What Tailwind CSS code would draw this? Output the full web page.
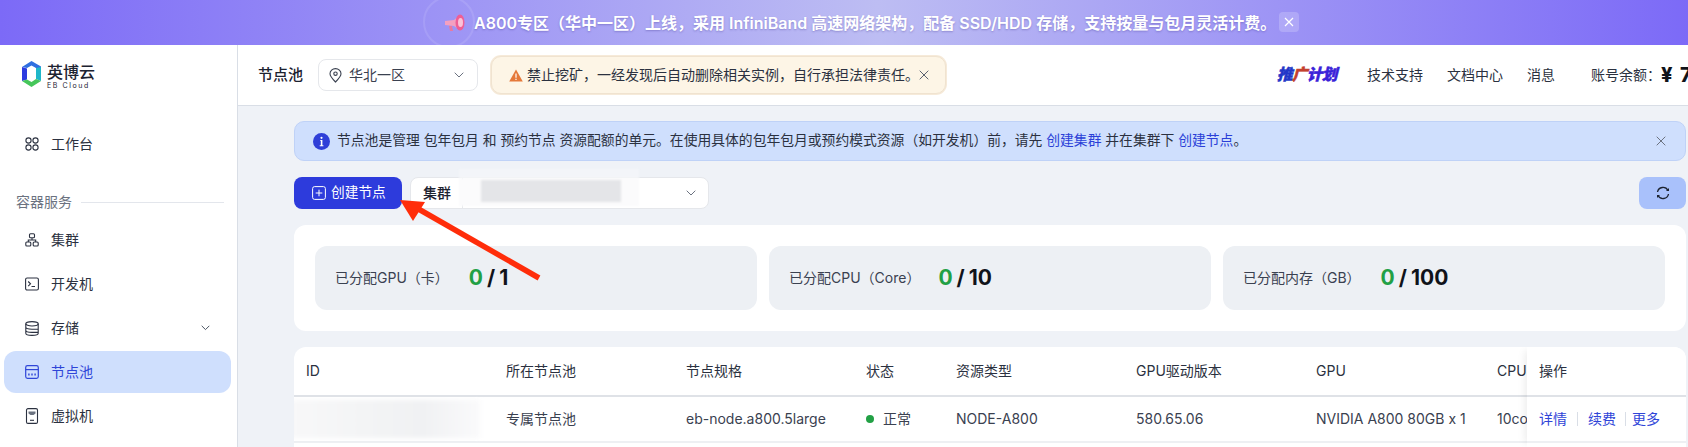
<!DOCTYPE html>
<html lang="zh-CN">
<head>
  <meta charset="UTF-8">
  <title>节点池</title>
  <script src="https://cdn.jsdelivr.net/npm/@tailwindcss/browser@4"></script>
</head>
<body class="[font-family:Inter,'Noto_Sans_CJK_SC',sans-serif] text-sm text-[#2b3140]">
<div class="relative w-[1688px] h-[447px] overflow-hidden flex flex-col bg-[#eff2f7]">
  <!-- banner -->
  <div class="relative h-[45px] shrink-0 overflow-hidden flex items-center pl-[474px] bg-[linear-gradient(90deg,#7c6af7_0%,#bdbdf3_52%,#7c6af7_100%)]">
    <div class="absolute left-[423px] top-[-4px] w-[52px] h-[52px] rounded-full border-2 border-white/10"></div>
    <svg class="absolute left-[444px] top-[13px]" width="22" height="20" viewBox="0 0 22 20">
      <path d="M1 8l9-1 6-5v15l-6-4-9-1z" fill="#f4a0c0"/>
      <ellipse cx="16" cy="9.500" rx="4.500" ry="8" fill="#ee5f96"/>
      <ellipse cx="16.500" cy="9.500" rx="2.500" ry="4.500" fill="#fbc3d8"/>
      <path d="M5 13l1 5h3l-1-5z" fill="#e9799f"/>
    </svg>
    <span class="text-base font-semibold text-white [text-shadow:0_1px_2px_rgba(60,50,140,0.35)] whitespace-nowrap">A800专区（华中一区）上线，采用 InfiniBand 高速网络架构，配备 SSD/HDD 存储，支持按量与包月灵活计费。</span>
    <div class="absolute left-[1279px] top-[12px] w-5 h-5 rounded bg-white/20 flex items-center justify-center">
      <svg width="10" height="10" viewBox="0 0 10 10" stroke="#fff" stroke-width="1.200"><path d="M1 1l8 8M9 1l-8 8"/></svg>
    </div>
  </div>

  <div class="flex flex-1 min-h-0">
    <!-- sidebar -->
    <aside class="w-[238px] shrink-0 bg-white border-r border-[#d9dee6]">
      <div class="h-[78px] pt-[16px] pl-[22px] flex items-start gap-[6px]">
        <svg width="19" height="26" viewBox="0 0 19 26">
          <path d="M9.500 0L19 5.500v4L14 7 9.500 4.500 5 7 0 6z" fill="#2f6fe0"/>
          <path d="M0 6l5 1.500v11L0 20z" fill="#2c3be0"/>
          <path d="M14 7l5 -1v14l-5-2z" fill="#1fb6c9"/>
          <path d="M5 18.500l4.500 2.500 4.500-3 5 2-9.500 6L0 20z" fill="#45c65a"/>
        </svg>
        <div class="flex flex-col pt-[2px] text-[#1c2230]">
          <span class="text-[16px] leading-[18px] font-medium whitespace-nowrap">英博云</span>
          <span class="text-[7px] leading-[9px] tracking-[1.6px] whitespace-nowrap">EB Cloud</span>
        </div>
      </div>
      <nav class="flex flex-col gap-[2px] px-[6px] ml-[-2px]">
        <a class="h-[42px] flex items-center gap-[12px] pl-[21px]">
          <svg width="14" height="14" viewBox="0 0 14 14" fill="none" stroke="#2b3140" stroke-width="1.100"><circle cx="3.500" cy="3.500" r="2.600"/><circle cx="10.500" cy="3.500" r="2.600"/><circle cx="3.500" cy="10.500" r="2.600"/><circle cx="10.500" cy="10.500" r="2.600"/></svg>
          工作台
        </a>
        <div class="mt-[24px] mb-[4px] h-[22px] flex items-center gap-[9px] ml-[12px] text-[#6b7280]">
          <span class="whitespace-nowrap">容器服务</span><span class="h-px w-[143px] bg-[#e3e6ec]"></span>
        </div>
        <a class="h-[42px] flex items-center gap-[12px] pl-[21px]">
          <svg width="14" height="14" viewBox="0 0 14 14" fill="none" stroke="#2b3140" stroke-width="1.100"><rect x="4.500" y="0.800" width="5" height="4" rx="1"/><rect x="0.800" y="9" width="5" height="4" rx="1"/><rect x="8.200" y="9" width="5" height="4" rx="1"/><path d="M7 5v2M3.300 9V7h7.400v2"/></svg>
          集群
        </a>
        <a class="h-[42px] flex items-center gap-[12px] pl-[21px]">
          <svg width="14" height="14" viewBox="0 0 14 14" fill="none" stroke="#2b3140" stroke-width="1.100"><rect x="0.600" y="1" width="12.800" height="12" rx="1.500"/><path d="M3.200 4.500l2.300 2.300-2.300 2.300M6.500 9.500h3.500"/></svg>
          开发机
        </a>
        <a class="h-[42px] flex items-center gap-[12px] pl-[21px]">
          <svg width="14" height="15" viewBox="0 0 14 15" fill="none" stroke="#2b3140" stroke-width="1.100"><ellipse cx="7" cy="2.800" rx="6.200" ry="2.200"/><path d="M0.800 2.800v9.400c0 1.200 2.800 2.200 6.200 2.200s6.200-1 6.200-2.200V2.800M0.800 6c0 1.200 2.800 2.200 6.200 2.200h6.200M0.800 9.200c0 1.200 2.800 2.200 6.200 2.200h6.200"/></svg>
          存储
          <svg class="ml-[110px]" width="9" height="6" viewBox="0 0 9 6" fill="none" stroke="#4b5563" stroke-width="1"><path d="M0.700 0.800L4.500 4.600 8.300 0.800"/></svg>
        </a>
        <a class="h-[42px] flex items-center gap-[12px] pl-[21px] rounded-[12px] bg-[#cfdffd] text-[#2f45d8]">
          <svg width="14" height="14" viewBox="0 0 14 14" fill="none" stroke="#2f45d8" stroke-width="1.200"><rect x="0.700" y="0.700" width="12.600" height="12.600" rx="1.800"/><path d="M0.700 4.600h12.600"/><path d="M3.200 9.500h1.400M6.300 9.500h1.400M9.400 9.500h1.400" stroke-width="2"/></svg>
          节点池
        </a>
        <a class="h-[42px] flex items-center gap-[12px] pl-[21px]">
          <svg width="14" height="16" viewBox="0 0 14 16" fill="none" stroke="#2b3140" stroke-width="1.100"><rect x="1.500" y="0.600" width="11" height="14.800" rx="1.500"/><path d="M3.500 3.600h7v2l-2 1.500h-3l-2-1.500z" fill="#6b7280" stroke="none"/><path d="M5 12.300h4"/></svg>
          虚拟机
        </a>
      </nav>
    </aside>

    <main class="flex-1 min-w-0 flex flex-col">
      <!-- top bar -->
      <header class="h-[61px] shrink-0 bg-white border-b border-[#d9dee6] flex items-center pl-[20px]">
        <span class="text-[15px] font-medium text-[#1c2230] whitespace-nowrap">节点池</span>
        <div class="ml-[15px] w-[160px] h-[32px] shrink-0 rounded-[8px] border border-[#e5e7eb] flex items-center pl-[10px] pr-[13px] gap-[7px]">
          <svg width="13" height="15" viewBox="0 0 13 15" fill="none" stroke="#3a4150" stroke-width="1.100"><path d="M6.500 14C3 10.500 1 8.200 1 5.800a5.500 5.200 0 0 1 11 0C12 8.200 10 10.500 6.500 14z"/><circle cx="6.500" cy="5.700" r="1.700"/></svg>
          <span class="whitespace-nowrap text-[#3a4150]">华北一区</span>
          <svg class="ml-auto" width="10" height="6" viewBox="0 0 10 6" fill="none" stroke="#6b7280" stroke-width="1"><path d="M0.700 0.700L5 5l4.300-4.300"/></svg>
        </div>
        <div class="ml-[13px] w-[455px] h-[38px] shrink-0 rounded-[10px] bg-[#fdf5e6] border border-[#f0e3d0] shadow-[0_0_0_1px_#f6ead9] flex items-center pl-[17px] gap-[4px]">
          <svg width="14" height="13" viewBox="0 0 14 13"><path d="M7 0.500L13.800 12.500H0.200z" fill="#e5793a"/><path d="M6.400 4.500h1.200v4.300H6.400zM6.400 9.700h1.200v1.300H6.400z" fill="#fff"/></svg>
          <span class="whitespace-nowrap text-[#2b3140]">禁止挖矿，一经发现后自动删除相关实例，自行承担法律责任。</span>
          <svg class="ml-[-4px]" width="10" height="10" viewBox="0 0 10 10" stroke="#5b6270" stroke-width="1"><path d="M0.700 0.700l8.600 8.600M9.300 0.700l-8.600 8.600"/></svg>
        </div>
        <span class="ml-[331px] shrink-0 w-[60px] text-[15.500px] leading-[20px] font-black italic tracking-[-0.6px] whitespace-nowrap [-webkit-text-stroke:0.5px_currentColor]"><span class="text-[#2337c8]">推</span><span class="text-[#c4402f]">广</span><span class="text-[#3a22d8]">计</span><span class="text-[#3a22d8]">划</span></span>
        <span class="ml-[30px] shrink-0 whitespace-nowrap">技术支持</span>
        <span class="ml-[24px] shrink-0 whitespace-nowrap">文档中心</span>
        <span class="ml-[24px] shrink-0 whitespace-nowrap">消息</span>
        <span class="ml-[36px] shrink-0 whitespace-nowrap">账号余额：</span>
        <span class="shrink-0 whitespace-nowrap text-[20px] font-extrabold text-[#10131a] [word-spacing:3px]">¥ 7.</span>
      </header>

      <!-- content -->
      <div class="flex-1 min-h-0 pl-[56px] pr-[2px] pt-[15px] flex flex-col">
        <div class="h-[40px] shrink-0 rounded-[10px] bg-[#cfdffd] border border-[#bfd2f7] flex items-center pl-[18px] pr-[19px] text-[#2b3140]">
          <svg width="17" height="17" viewBox="0 0 17 17"><circle cx="8.500" cy="8.500" r="8.500" fill="#2f3fd8"/><circle cx="8.500" cy="4.800" r="1.100" fill="#fff"/><path d="M7.300 7h2.100v5.300h1v1H6.700v-1h1.100V8H7.300z" fill="#fff"/></svg>
          <span class="ml-[7px] text-[13.800px] whitespace-nowrap">节点池是管理 包年包月 和 预约节点 资源配额的单元。在使用具体的包年包月或预约模式资源（如开发机）前，请先 <a class="text-[#2a3fd8]">创建集群</a> 并在集群下 <a class="text-[#2a3fd8]">创建节点</a>。</span>
          <svg class="ml-auto" width="10" height="10" viewBox="0 0 10 10" stroke="#6b7280" stroke-width="1"><path d="M0.700 0.700l8.600 8.600M9.300 0.700l-8.600 8.600"/></svg>
        </div>

        <div class="mt-[16px] h-[32px] shrink-0 flex items-center">
          <button class="w-[108px] h-[32px] rounded-[8px] bg-[#2d3bdc] text-white flex items-center pl-[18px] gap-[5px]">
            <svg width="14" height="14" viewBox="0 0 14 14" fill="none" stroke="#fff" stroke-width="1"><rect x="0.600" y="0.600" width="12.800" height="12.800" rx="2"/><path d="M7 3.700v6.600M3.700 7h6.600"/></svg>
            <span class="text-[13.700px] whitespace-nowrap">创建节点</span>
          </button>
          <div class="relative ml-[8px] w-[299px] h-[32px] rounded-[8px] bg-white border border-[#e5e7eb] flex items-center pl-[12px] pr-[12px]">
            <span class="font-medium text-[#1c2230] whitespace-nowrap">集群</span>
            <span class="absolute left-[51px] top-0 bottom-0 w-px bg-[#e5e7eb]"></span>
            <span class="absolute left-[48px] top-[-9px] w-[180px] h-[9px] bg-[#f3f5f9] blur-[1px]"></span>
            <span class="absolute left-[48px] top-0 w-[180px] h-[28px] bg-[#fbfbfc] blur-[1px]"></span>
            <span class="absolute left-[70px] top-[2px] w-[140px] h-[22px] bg-[#e4e5e8] blur-[1px]"></span>
            <svg class="ml-auto" width="10" height="6" viewBox="0 0 10 6" fill="none" stroke="#6b7280" stroke-width="1"><path d="M0.700 0.700L5 5l4.300-4.300"/></svg>
          </div>
          <button class="ml-auto w-[47px] h-[32px] rounded-[8px] bg-[#a9c1fb] flex items-center justify-center">
            <svg width="14" height="14" viewBox="0 0 14 14" fill="none" stroke="#1c2230" stroke-width="1.300"><path d="M1.500 6A5.600 5.600 0 0 1 12 4.500M12.500 8A5.600 5.600 0 0 1 2 9.500"/><path d="M10 5h3V2z" fill="#1c2230" stroke="none"/><path d="M4 9H1v3z" fill="#1c2230" stroke="none"/></svg>
          </button>
        </div>

        <!-- quota cards -->
        <section class="mt-[16px] h-[106px] shrink-0 rounded-[12px] bg-white px-[21px] flex items-center gap-[12px]">
          <div class="flex-1 h-[64px] rounded-[12px] bg-[#edf0f4] flex items-center pl-[20px]">
            <span class="text-[#3a4150] whitespace-nowrap">已分配GPU（卡）</span>
            <span class="ml-[20px] flex gap-[4px] text-[21px] font-bold whitespace-nowrap"><span class="text-[#22a045]">0</span><span class="text-[#10131a]">/</span><span class="text-[#10131a]">1</span></span>
          </div>
          <div class="flex-1 h-[64px] rounded-[12px] bg-[#edf0f4] flex items-center pl-[20px]">
            <span class="text-[#3a4150] whitespace-nowrap">已分配CPU（Core）</span>
            <span class="ml-[18px] flex gap-[4px] text-[21px] font-bold whitespace-nowrap"><span class="text-[#22a045]">0</span><span class="text-[#10131a]">/</span><span class="text-[#10131a]">10</span></span>
          </div>
          <div class="flex-1 h-[64px] rounded-[12px] bg-[#edf0f4] flex items-center pl-[20px]">
            <span class="text-[#3a4150] whitespace-nowrap">已分配内存（GB）</span>
            <span class="ml-[20px] flex gap-[4px] text-[21px] font-bold whitespace-nowrap"><span class="text-[#22a045]">0</span><span class="text-[#10131a]">/</span><span class="text-[#10131a]">100</span></span>
          </div>
        </section>

        <!-- table -->
        <section class="relative mt-[16px] flex-1 min-h-0 rounded-t-[12px] bg-white overflow-hidden">
          <div class="h-[50px] grid grid-cols-[200px_180px_180px_90px_180px_180px_181px_181px] items-center border-b-2 border-[#dfe2e7] pl-[12px] text-[#2b3140] whitespace-nowrap">
            <span>ID</span><span>所在节点池</span><span>节点规格</span><span>状态</span><span>资源类型</span><span>GPU驱动版本</span><span>GPU</span><span>CPU</span>
          </div>
          <div class="h-[46px] grid grid-cols-[200px_180px_180px_90px_180px_180px_181px_181px] items-center border-b-2 border-[#eef0f3] pl-[12px] text-[#3a4150] whitespace-nowrap">
            <span class="relative h-[38px] block"><span class="absolute left-[-16px] top-0 w-[190px] h-[38px] bg-[linear-gradient(90deg,#f8f8f9,#f3f4f5_40%,#f0f1f3_70%,#fafafb)] blur-[2px]"></span></span>
            <span>专属节点池</span>
            <span>eb-node.a800.5large</span>
            <span class="flex items-center gap-[9px]"><span class="w-[8px] h-[8px] rounded-full bg-[#22a045]"></span>正常</span>
            <span>NODE-A800</span>
            <span>580.65.06</span>
            <span>NVIDIA A800 80GB x 1</span>
            <span>10core</span>
          </div>
          <!-- fixed action column -->
          <div class="absolute right-0 top-0 bottom-0 w-[159px] bg-white shadow-[-6px_0_8px_-4px_rgba(0,0,0,0.08)]">
            <div class="h-[50px] flex items-center pl-[12px] border-b-2 border-[#dfe2e7]">操作</div>
            <div class="h-[46px] flex items-center pl-[12px] border-b-2 border-[#eef0f3] text-[#2f45d8] whitespace-nowrap">
              <a>详情</a><span class="mx-[10px] w-px h-[14px] bg-[#d9dee6]"></span><a>续费</a><span class="ml-[9px] mr-[6px] w-px h-[14px] bg-[#d9dee6]"></span><a>更多</a>
            </div>
          </div>
        </section>
      </div>
    </main>
  </div>

  <!-- red annotation arrow -->
  <svg class="absolute left-0 top-0 pointer-events-none" width="1688" height="447" viewBox="0 0 1688 447">
    <path d="M539 278L415 207" stroke="#ff2d0a" stroke-width="5.500" fill="none"/>
    <path d="M400 200L425 202L413 221z" fill="#ff2d0a"/>
  </svg>
</div>
</body>
</html>
